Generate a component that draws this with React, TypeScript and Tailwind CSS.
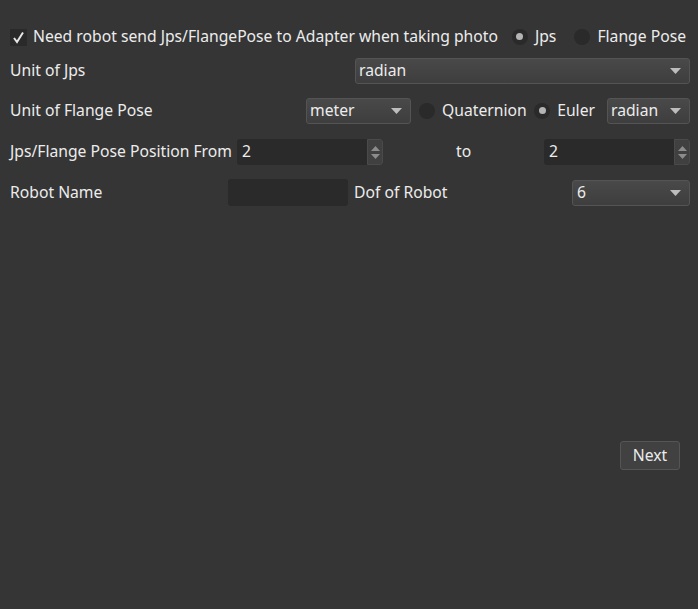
import React from 'react';

const font = { fontFamily: '"Noto Sans", "Open Sans", sans-serif' };

function Radio({ checked }: { checked?: boolean }) {
  return (
    <span className="flex h-[16px] w-[16px] shrink-0 items-center justify-center rounded-full bg-[#2a2a2a]">
      {checked && <span className="h-[7px] w-[7px] rounded-full bg-[#b4b4b4]" />}
    </span>
  );
}

function Combo({ value, className }: { value: string; className: string }) {
  return (
    <div
      className={`flex h-[26px] items-center justify-between rounded-[3px] border border-[#545454] bg-gradient-to-b from-[#494949] to-[#3e3e3e] pl-[3px] pr-[8px] ${className}`}
    >
      <span>{value}</span>
      <svg width="11" height="6" viewBox="0 0 11 6">
        <path d="M0 0 L11 0 L5.5 6 Z" fill="#bdbdbd" />
      </svg>
    </div>
  );
}

function SpinBox({ value, className }: { value: string; className: string }) {
  return (
    <div className={`flex h-[26px] rounded-[3px] bg-[#2a2a2a] ${className}`}>
      <span className="flex flex-1 items-center pl-[5px]">{value}</span>
      <div className="flex w-[16px] flex-col items-center justify-center gap-[3px] rounded-r-[3px] border border-[#4a4a4a] bg-[#404040]">
        <svg width="9" height="5" viewBox="0 0 9 5">
          <path d="M0 5 L9 5 L4.5 0 Z" fill="#8c8c8c" />
        </svg>
        <svg width="9" height="5" viewBox="0 0 9 5">
          <path d="M0 0 L9 0 L4.5 5 Z" fill="#8c8c8c" />
        </svg>
      </div>
    </div>
  );
}

export default function App() {
  return (
    <div
      className="flex h-[609px] w-[698px] flex-col bg-[#353535] pl-[10px] pr-[8px] pt-[25px] text-[15.7px] text-[#ececec]"
      style={font}
    >
      <div className="flex h-[24px] items-center">
        <span className="flex h-[17px] w-[17px] shrink-0 items-center justify-center bg-[#2a2a2a]">
          <svg width="13" height="13" viewBox="0 0 13 13">
            <path d="M2 7 L5 11 L11 1.5" stroke="#e6e6e6" strokeWidth="2" fill="none" />
          </svg>
        </span>
        <span className="ml-[6px] whitespace-nowrap">Need robot send Jps/FlangePose to Adapter when taking photo</span>
        <span className="ml-auto flex items-center">
          <Radio checked />
          <span className="ml-[7px]">Jps</span>
          <span className="ml-[18px]">
            <Radio />
          </span>
          <span className="ml-[7px] mr-[4px] whitespace-nowrap">Flange Pose</span>
        </span>
      </div>

      <div className="mt-[9px] flex h-[26px] items-center">
        <span className="w-[345px]">Unit of Jps</span>
        <Combo value="radian" className="flex-1" />
      </div>

      <div className="mt-[14px] flex h-[26px] items-center">
        <span className="w-[296px]">Unit of Flange Pose</span>
        <Combo value="meter" className="w-[105px]" />
        <span className="ml-[8px]">
          <Radio />
        </span>
        <span className="ml-[7px]">Quaternion</span>
        <span className="ml-auto flex items-center">
          <Radio checked />
          <span className="ml-[7px]">Euler</span>
        </span>
        <Combo value="radian" className="ml-[12px] w-[83px]" />
      </div>

      <div className="mt-[15px] flex h-[26px] items-center">
        <span className="w-[227px] whitespace-nowrap">Jps/Flange Pose Position From</span>
        <SpinBox value="2" className="w-[146px]" />
        <span className="ml-[73px]">to</span>
        <SpinBox value="2" className="ml-auto w-[146px]" />
      </div>

      <div className="mt-[14px] flex h-[27px] items-center">
        <span className="w-[218px]">Robot Name</span>
        <div className="h-[27px] w-[120px] rounded-[3px] bg-[#2a2a2a]" />
        <span className="ml-[6px]">Dof of Robot</span>
        <Combo value="6" className="ml-auto w-[118px] pl-[4px]" />
      </div>

      <div className="mt-[235px] flex justify-end pr-[10px]">
        <button className="h-[29px] w-[60px] rounded-[3px] border border-[#555555] bg-[#414141] text-[15.7px] text-[#ececec]">
          Next
        </button>
      </div>
    </div>
  );
}
